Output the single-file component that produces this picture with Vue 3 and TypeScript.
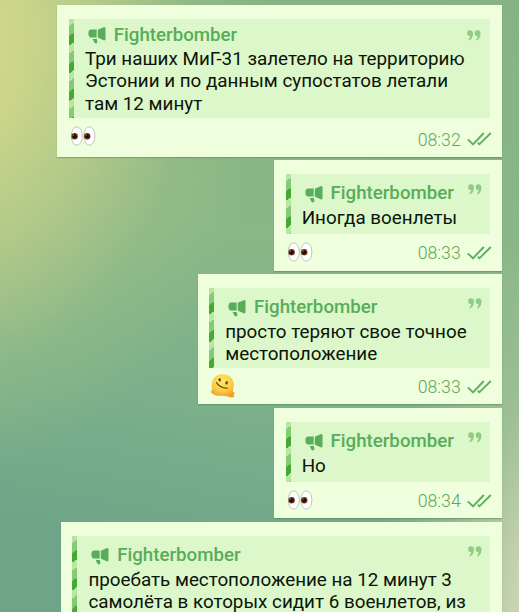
<script setup lang="ts">
interface Message {
  id: number
  size: string
  lines: string[]
  emoji?: 'eyes' | 'melt'
  time?: string
}

const author = 'Fighterbomber'

const messages: Message[] = [
  {
    id: 1,
    size: 'wide',
    lines: ['Три наших МиГ-31 залетело на территорию', 'Эстонии и по данным супостатов летали', 'там 12 минут'],
    emoji: 'eyes',
    time: '08:32',
  },
  { id: 2, size: 'small', lines: ['Иногда военлеты'], emoji: 'eyes', time: '08:33' },
  { id: 3, size: 'medium', lines: ['просто теряют свое точное', 'местоположение'], emoji: 'melt', time: '08:33' },
  { id: 4, size: 'small', lines: ['Но'], emoji: 'eyes', time: '08:34' },
  { id: 5, size: 'long', lines: ['проебать местоположение на 12 минут 3', 'самолёта в которых сидит 6 военлетов, из'] },
]
</script>

<template>
  <main class="chat">
    <article v-for="m in messages" :key="m.id" class="bubble" :class="m.size">
      <blockquote class="quote">
        <header class="head">
          <svg class="horn" viewBox="0 0 18 18">
            <path d="M2.600 2.600H8.600V10.600H2.600Q.4 10.200 .4 6.600Q.4 3 2.600 2.600Z" />
            <path d="M9.800 2.800L15.600 .2Q17.500 -.3 17.500 1.500V12Q17.500 13.800 15.600 13.300L9.800 10.600Z" />
            <path d="M4.600 12H8.800L9.400 15Q9.400 16.400 7.900 16.400Q6.600 16.400 6.200 15.300Z" />
          </svg>
          <span class="author">{{ author }}</span>
          <svg class="marks" viewBox="0 0 14 11">
            <path d="M3 .3A2.900 2.900 0 0 1 6 3.500C6 7 4.500 9.500 2 10.500Q1.100 10.300 1.600 9.400Q3 7.800 3.100 6.100A2.900 2.900 0 0 1 3 .3Z" />
            <path d="M10.500 .3A2.900 2.900 0 0 1 13.500 3.500C13.500 7 12 9.500 9.500 10.500Q8.600 10.300 9.100 9.400Q10.500 7.800 10.600 6.100A2.900 2.900 0 0 1 10.500 .3Z" />
          </svg>
        </header>
        <p v-for="line in m.lines" :key="line" class="line">{{ line }}</p>
      </blockquote>
      <footer v-if="m.time" class="foot">
        <svg v-if="m.emoji === 'eyes'" class="emoji" viewBox="0 0 26 22">
          <g fill="#fff" stroke="#a9aaa6" stroke-width=".7">
            <ellipse cx="6.800" cy="11" rx="5.500" ry="9.200" />
            <ellipse cx="19.400" cy="11" rx="5.500" ry="9.200" />
          </g>
          <circle cx="4.600" cy="11.200" r="3.200" fill="#6a3418" />
          <circle cx="17.200" cy="11.200" r="3.200" fill="#6a3418" />
          <circle cx="4.600" cy="11.300" r="2" fill="#220d05" />
          <circle cx="17.200" cy="11.300" r="2" fill="#220d05" />
          <circle cx="3.500" cy="10" r=".6" fill="#c8a690" />
          <circle cx="16.100" cy="10" r=".6" fill="#c8a690" />
        </svg>
        <svg v-else class="emoji melt" viewBox="0 0 26 25">
          <defs>
            <radialGradient id="melt" cx=".48" cy=".3" r=".7">
              <stop offset="0" stop-color="#ffe866" />
              <stop offset=".6" stop-color="#fbcd42" />
              <stop offset="1" stop-color="#f29d2d" />
            </radialGradient>
          </defs>
          <path d="M1.800 13C1.200 5.500 6.500 1.200 12.800 1.200S24.200 6 23.800 12.500C23.700 15.500 22.400 17.600 22.900 18.700Q24.800 19.400 24.600 20.700Q24.300 21.800 23.400 22Q25 23.200 23.800 24.100Q21.500 24.900 18.500 23.800C16 22.800 13.500 22.700 10.500 22.700C7.500 22.800 5 22.500 3.600 21.200Q.8 20.600 1 18.600Q1.300 17.200 2.400 16.600Q1.900 15 1.800 13Z" fill="url(#melt)" />
          <ellipse cx="9.700" cy="6.900" rx="1.200" ry="1.700" fill="#5c3a12" transform="rotate(-10 9.700 6.900)" />
          <ellipse cx="16.600" cy="9.900" rx="1.200" ry="1.700" fill="#5c3a12" transform="rotate(12 16.600 9.900)" />
          <path d="M6.500 9.500Q9 14.800 17.400 15.200" fill="none" stroke="#5c3a12" stroke-width="1.100" stroke-linecap="round" />
        </svg>
        <span class="time">{{ m.time }}</span>
        <svg class="checks" viewBox="0 0 25 14">
          <path d="M.8 7.400L6 12.300L16.800 1M10.800 10.800L12.400 12.300L23.800 1" />
        </svg>
      </footer>
    </article>
  </main>
</template>

<style>
body {
  margin: 0;
}
</style>

<style scoped>
.chat {
  box-sizing: border-box;
  height: 612px;
  overflow: hidden;
  padding: 4.700px 17.300px 0 0;
  display: flex;
  flex-direction: column;
  align-items: flex-end;
  gap: 3.200px;
  font-family: Roboto, 'Noto Sans', sans-serif;
  background:
    radial-gradient(ellipse 190px 420px at 569px 640px, #d0d6b7 0%, #c9d3b2 30%, rgba(176, 200, 156, 0.6) 62%, rgba(150, 188, 145, 0) 100%),
    radial-gradient(ellipse 330px 440px at -60px 40px, #d2d88b 0%, #cbd58a 25%, rgba(184, 204, 137, 0.85) 50%, rgba(160, 193, 136, 0.4) 76%, rgba(145, 188, 136, 0) 100%),
    linear-gradient(190deg, #86b383 0%, #8ab787 40%, #7bb08a 65%, #6ea588 88%);
}

.bubble {
  box-sizing: border-box;
  flex: none;
  padding: 14.300px 11.700px 0 11.500px;
  background: #efffde;
  box-shadow: 0 1px 1px rgba(72, 120, 70, 0.4);
}

.wide {
  width: 444.400px;
  height: 152px;
}

.small {
  width: 227.700px;
  height: 110.800px;
}

.medium {
  width: 304.200px;
  height: 130.500px;
}

.long {
  width: 441px;
  height: 160px;
}

.quote {
  box-sizing: border-box;
  position: relative;
  margin: 0;
  height: 60.300px;
  padding: 8.200px 0 0 16.200px;
  background: #dcf7c9;
}

.quote::before {
  content: '';
  position: absolute;
  inset: 0 auto 0 0;
  width: 5px;
  background: repeating-linear-gradient(145deg, #b7e6a2 0 5.700px, #84cb76 5.700px 14.100px, #48a834 14.100px 21.900px, #b7e6a2 21.900px 22.800px);
}

.wide .quote {
  height: 98.700px;
  padding-top: 4.700px;
}

.medium .quote {
  height: 80px;
}

.long .quote {
  height: 150px;
}

.head {
  height: 23.500px;
  display: flex;
  align-items: flex-start;
  color: #57ad59;
}

.horn {
  width: 18px;
  height: 18px;
  margin: 3.500px 8px 0 2.800px;
  fill: currentColor;
}

.author {
  font-size: 18.700px;
  line-height: 23px;
  font-weight: 500;
}

.marks {
  width: 14px;
  height: 11px;
  margin: 1.700px 8px 0 auto;
  fill: #8fcd84;
}

.wide .marks {
  margin: 6.500px 9.300px 0 auto;
}

.line {
  margin: 0;
  height: 22.300px;
  font-size: 18.820px;
  line-height: 25px;
  color: #0b1408;
  white-space: nowrap;
}

.foot {
  display: flex;
  align-items: flex-start;
  height: 30px;
  padding-top: 6.500px;
}

.wide .foot {
  padding-top: 8px;
}

.emoji {
  width: 26px;
  height: 22px;
  margin-left: 1px;
}

.wide .emoji {
  margin-top: -0.500px;
}

.melt {
  height: 25px;
  margin-top: -1.500px;
}

.time {
  margin: 2.500px 6.300px 0 auto;
  font-size: 17.700px;
  line-height: 20px;
  font-weight: 300;
  color: #5fa65c;
}

.wide .time {
  margin-top: 4px;
}

.checks {
  width: 25px;
  height: 14px;
  margin: 5.300px -2px 0 0;
  fill: none;
  stroke: #5fae5e;
  stroke-width: 1.900;
}

.wide .checks {
  margin-top: 6.500px;
}
</style>
